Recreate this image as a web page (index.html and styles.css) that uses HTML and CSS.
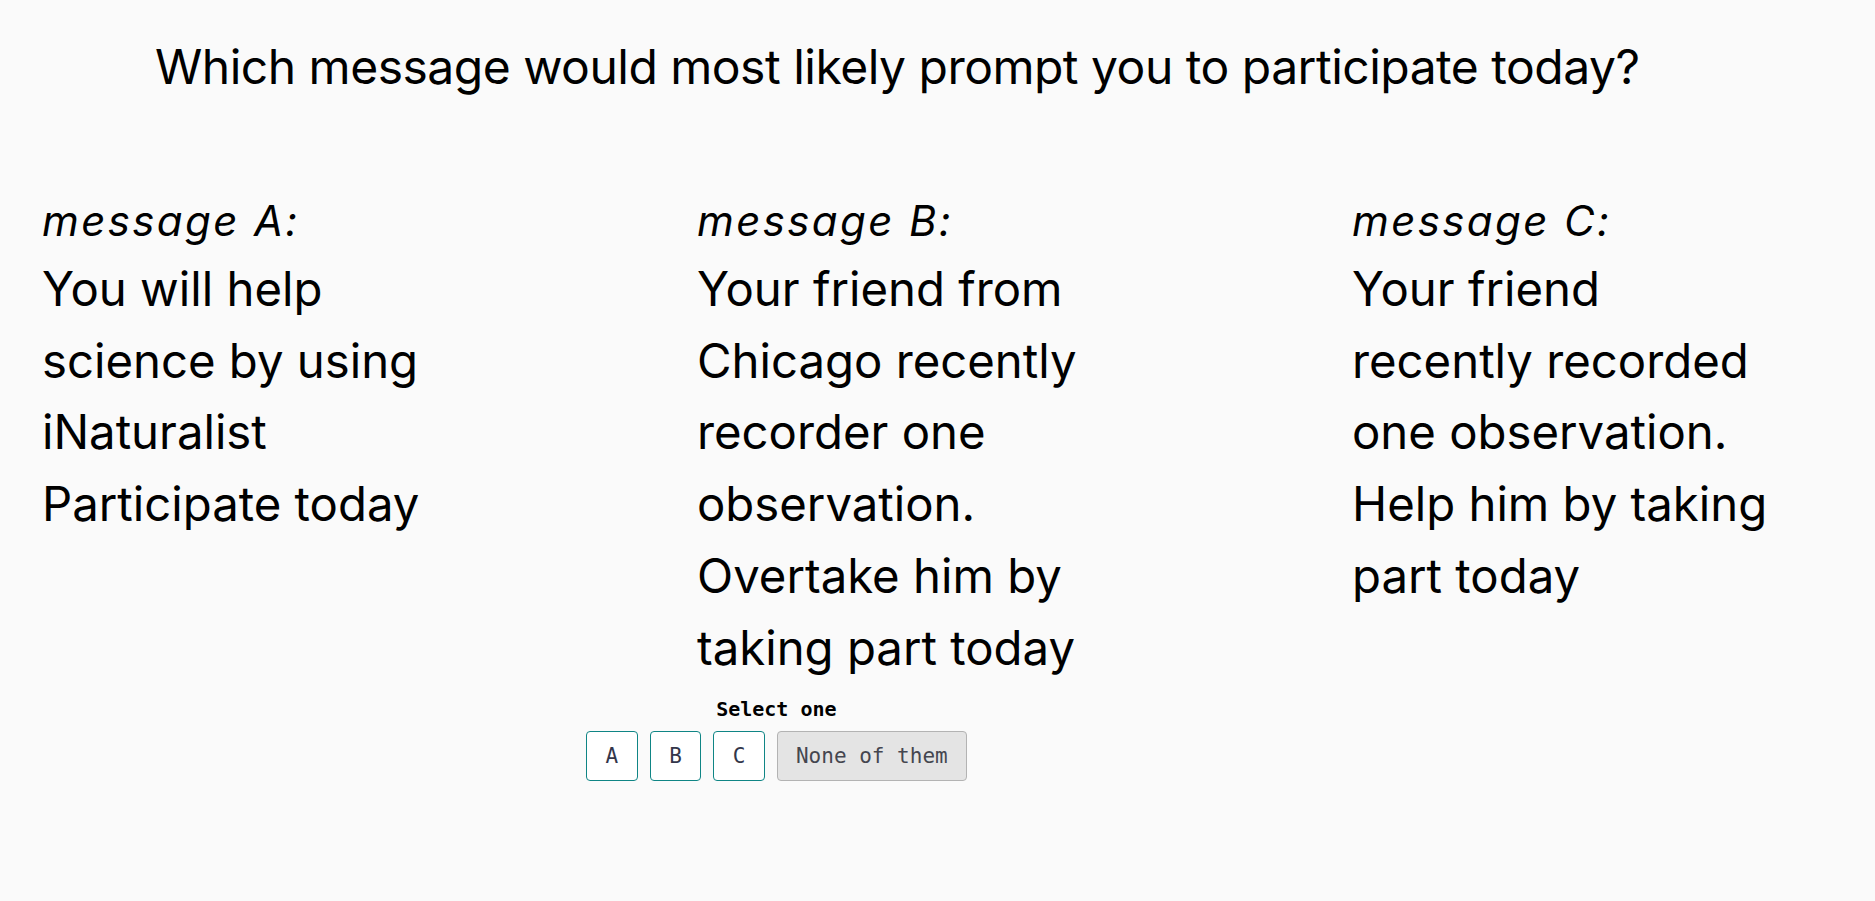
FILE: index.html
```html
<!DOCTYPE html>
<html lang="en">
<head>
<meta charset="utf-8">
<title>Which message</title>
<link rel="stylesheet" href="styles.css">
</head>
<body>
<main class="page">
  <h1 class="question">Which message would most likely prompt you to participate today?</h1>
  <section class="messages">
    <div class="message">
      <div class="message-label">message A:</div>
      <div class="message-text">You will help science by using iNaturalist Participate today</div>
    </div>
    <div class="message">
      <div class="message-label">message B:</div>
      <div class="message-text">Your friend from Chicago recently recorder one observation. Overtake him by taking part today</div>
    </div>
    <div class="message">
      <div class="message-label">message C:</div>
      <div class="message-text">Your friend recently recorded one observation. Help him by taking part today</div>
    </div>
  </section>
  <section class="choice">
    <div class="choice-group">
      <div class="choice-label">Select one</div>
      <div class="choice-buttons">
        <button class="choice-btn">A</button>
        <button class="choice-btn">B</button>
        <button class="choice-btn">C</button>
        <button class="choice-btn choice-btn-none">None of them</button>
      </div>
    </div>
  </section>
</main>
</body>
</html>
```
FILE: styles.css
```css
html, body {
  margin: 0;
  padding: 0;
  background: #fafafa;
}

.page {
  display: flex;
  flex-direction: column;
  font-family: "Inter", "Roboto", "Liberation Sans", sans-serif;
  color: #000;
}

.question {
  margin: 0;
  padding: 37px 0 0 155px;
  font-size: 48px;
  font-weight: 400;
  line-height: 60px;
  letter-spacing: -0.5px;
}

.messages {
  display: grid;
  grid-template-columns: repeat(3, 430px);
  column-gap: 225px;
  padding: 91px 0 0 42px;
}

.message-label {
  font-size: 42px;
  font-style: italic;
  line-height: 65px;
  letter-spacing: 2.4px;
}

.message-text {
  font-size: 47.3px;
  line-height: 71.7px;
}

.choice {
  display: flex;
  padding: 14px 0 0 586px;
}

.choice-group {
  display: flex;
  flex-direction: column;
  align-items: center;
  gap: 10px;
}

.choice-label {
  font-family: "DejaVu Sans Mono", "Liberation Mono", monospace;
  font-weight: 700;
  font-size: 20px;
  line-height: 24px;
  color: #000;
}

.choice-buttons {
  display: flex;
  gap: 12px;
}

.choice-btn {
  box-sizing: border-box;
  height: 50px;
  padding: 0 18.5px;
  border: 1px solid #0f8585;
  border-radius: 4px;
  background: #fff;
  color: #33364a;
  font-family: "DejaVu Sans Mono", "Liberation Mono", monospace;
  font-size: 21px;
  line-height: 24px;
}

.choice-btn-none {
  padding: 0 18px;
  background: #e4e4e4;
  border-color: #b3b3b3;
  color: #44464f;
}
```
